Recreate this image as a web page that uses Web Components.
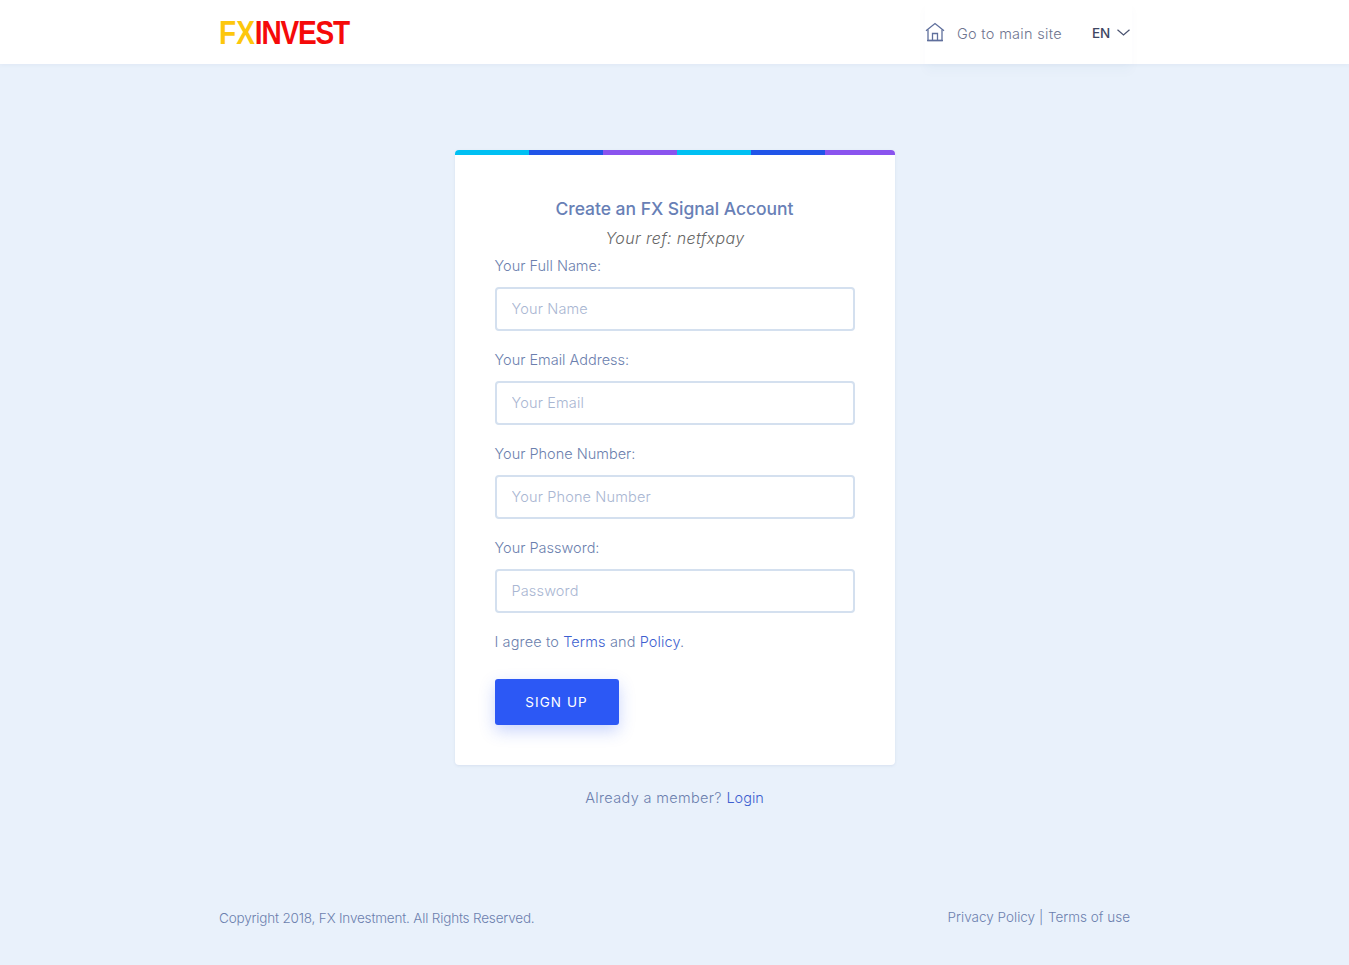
<!DOCTYPE html>
<html lang="en">
<head>
<meta charset="utf-8">
<title>FX Invest - Sign up</title>
<style>
    html, body { margin: 0; padding: 0; }
    body {
        background: #e9f1fb;
        font-family: Inter, "Liberation Sans", sans-serif;
        color: #6c7fae;
        min-height: 965px;
    }
</style>
</head>
<body>
<site-header></site-header>
<main-panel>
    <signup-card>
        <form-field label="Your Full Name:" placeholder="Your Name"></form-field>
        <form-field label="Your Email Address:" placeholder="Your Email"></form-field>
        <form-field label="Your Phone Number:" placeholder="Your Phone Number"></form-field>
        <form-field label="Your Password:" placeholder="Password"></form-field>
    </signup-card>
</main-panel>
<site-footer></site-footer>

<script>
class siteHeader extends HTMLElement {
    constructor() {
        super();
        this.attachShadow({ mode: "open" });
        this.shadowRoot.innerHTML = `
            <style>
                :host { display: block; height: 64px; background: #fff; box-shadow: 0 1px 4px rgba(60, 90, 140, .06); position: relative; }
                .wrap { width: 911px; height: 64px; margin: 0 auto; display: flex; align-items: center; justify-content: space-between; }
                .logo { font: bold 33px "Liberation Sans", sans-serif; line-height: 64px; letter-spacing: -1.4px; transform: scaleX(.85); transform-origin: left center; white-space: nowrap; color: #f50a0a; margin-top: 2px; }
                .logo span { color: #fdc70c; letter-spacing: 0; }
                nav { display: flex; align-items: center; height: 64px; width: 207px; box-sizing: border-box; position: relative; left: 2px; box-shadow: 0 8px 10px rgba(60, 90, 140, .025); }
                nav svg.home { width: 20px; height: 20px; margin-top: 0; }
                .go { font-size: 14.5px; font-weight: 300; color: #6f7590; margin-left: 12px; letter-spacing: .3px; margin-top: 3px; white-space: nowrap; }
                .lang { font-size: 13.5px; font-weight: 500; color: #3d4663; margin-left: 30px; margin-top: 1px; }
                nav svg.caret { width: 13px; height: 7px; margin-left: 7px; margin-top: 1px; }
            </style>
            <div class="wrap">
                <div class="logo"><span>FX</span>INVEST</div>
                <nav>
                    <svg class="home" viewBox="0 0 20 20" fill="none" stroke="#5f6f9c" stroke-width="1.3"><path d="M1 8.800 10 1.500l9 7.300"/><path d="M3 7.500V18.500H17V7.500"/><path d="M2 18.500h16"/><path d="M7.500 18.500V11.500h5V18.500"/></svg>
                    <span class="go">Go to main site</span>
                    <span class="lang">EN</span>
                    <svg class="caret" viewBox="0 0 13 7" fill="none" stroke="#4a5370" stroke-width="1.2"><path d="M.5.8 6.500 6l6-5.200"/></svg>
                </nav>
            </div>
        `;
    }
}
customElements.define("site-header", siteHeader);

class mainPanel extends HTMLElement {
    constructor() {
        super();
        this.attachShadow({ mode: "open" });
        this.shadowRoot.innerHTML = `
            <style>
                :host { display: flex; flex-direction: column; align-items: center; padding-top: 86px; }
                .member { margin-top: 22px; font-size: 14.500px; font-weight: 300; color: #6c7fae; line-height: 22px; letter-spacing: .35px; }
                a { color: #3d5fd0; text-decoration: none; letter-spacing: 0; }
            </style>
            <slot></slot>
            <div class="member">Already a member? <a href="#">Login</a></div>
        `;
    }
}
customElements.define("main-panel", mainPanel);

class signupCard extends HTMLElement {
    constructor() {
        super();
        this.attachShadow({ mode: "open" });
        this.shadowRoot.innerHTML = `
            <style>
                :host { display: block; width: 440px; height: 615px; box-sizing: border-box; background: #fff; border-radius: 4px; overflow: hidden; box-shadow: 0 1px 3px rgba(60, 90, 140, .1); }
                .bar { display: grid; grid-template-columns: repeat(5, 74.200px) 1fr; height: 5px; }
                .c { background: #00c0f3; } .b { background: #2155e8; } .p { background: #8a54ee; }
                .body { padding: 40px 40px 0; }
                h1 { margin: 0; text-align: center; font-size: 17.500px; font-weight: 500; line-height: 28px; color: #6880b6; letter-spacing: -.03px; }
                .ref { text-align: center; font-size: 16px; font-weight: 300; font-style: italic; color: #666; line-height: 24px; margin-top: 3px; padding-left: 1px; letter-spacing: .35px; }
                .fields { display: grid; row-gap: 19px; margin-top: 6px; }
                .agree { font-size: 14.500px; font-weight: 300; line-height: 22px; color: #6c7fae; margin-top: 18px; letter-spacing: .12px; }
                .agree a { color: #3d5fd0; text-decoration: none; }
                button { display: block; width: 124px; height: 46px; margin-top: 26px; border: 0; border-radius: 3px; background: #2c58f5; color: #fff; font: 400 13.500px Inter, "Liberation Sans", sans-serif; letter-spacing: 1.1px; box-shadow: 0 6px 16px rgba(44, 88, 245, .25); }
            </style>
            <div class="bar"><i class="c"></i><i class="b"></i><i class="p"></i><i class="c"></i><i class="b"></i><i class="p"></i></div>
            <div class="body">
                <h1>Create an FX Signal Account</h1>
                <div class="ref">Your ref: netfxpay</div>
                <div class="fields"><slot></slot></div>
                <div class="agree">I agree to <a href="#">Terms</a> and <a href="#">Policy</a>.</div>
                <button type="button">SIGN UP</button>
            </div>
        `;
    }
}
customElements.define("signup-card", signupCard);

class formField extends HTMLElement {
    constructor() {
        super();
        this.attachShadow({ mode: "open" });
    }
    connectedCallback() {
        this.shadowRoot.innerHTML = `
            <style>
                :host { display: block; }
                label { display: block; font-size: 14.500px; font-weight: 300; line-height: 20px; color: #6c7fae; }
                input { display: block; width: 100%; height: 44px; box-sizing: border-box; margin-top: 11px; padding: 0 15px 2px; border: 2px solid #d4e0ef; border-radius: 4px; background: #fff; font: 300 14.500px Inter, "Liberation Sans", sans-serif; letter-spacing: .15px; outline: 0; }
                input::placeholder { color: #a9b6d2; opacity: 1; }
            </style>
            <label>${this.getAttribute("label")}</label>
            <input type="text" placeholder="${this.getAttribute("placeholder")}">
        `;
    }
}
customElements.define("form-field", formField);

class siteFooter extends HTMLElement {
    constructor() {
        super();
        this.attachShadow({ mode: "open" });
        this.shadowRoot.innerHTML = `
            <style>
                :host { display: block; width: 911px; margin: 98px auto 0; }
                .row { display: flex; justify-content: space-between; font-size: 13.500px; font-weight: 300; color: #6c7fae; line-height: 22px; }
                .copy { letter-spacing: -.18px; }
                .links { margin-top: -1px; }
                .links i { font-style: normal; margin-right: 1px; }
                a { color: inherit; text-decoration: none; }
            </style>
            <div class="row">
                <div class="copy">Copyright 2018, FX Investment. All Rights Reserved.</div>
                <div class="links"><a href="#">Privacy Policy</a> <i>|</i> <a href="#">Terms of use</a></div>
            </div>
        `;
    }
}
customElements.define("site-footer", siteFooter);
</script>
</body>
</html>
